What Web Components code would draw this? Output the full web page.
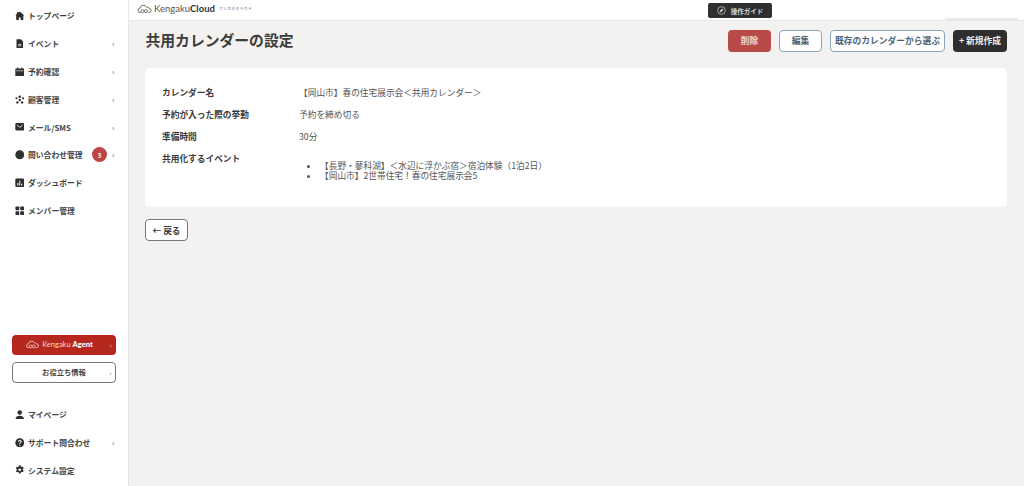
<!DOCTYPE html>
<html lang="ja">
<head>
<meta charset="utf-8">
<title>共用カレンダーの設定</title>
<style>
html, body { margin: 0; height: 100%; }
body { font-family: "Noto Sans CJK JP", "Noto Sans", sans-serif; color: #333; background: #f3f2f0; overflow: hidden; }
</style>
</head>
<body>
<app-shell>
  <side-nav slot="nav"></side-nav>
  <top-bar slot="top"></top-bar>
  <page-head slot="main" heading="共用カレンダーの設定">
    <ui-button kind="danger" style="width:43px">削除</ui-button>
    <ui-button kind="outline" style="width:43px">編集</ui-button>
    <ui-button kind="outline" style="width:115px">既存のカレンダーから選ぶ</ui-button>
    <ui-button kind="dark" style="width:54px">+ 新規作成</ui-button>
  </page-head>
  <detail-card slot="main">
    <detail-row label="カレンダー名">【岡山市】春の住宅展示会＜共用カレンダー＞</detail-row>
    <detail-row label="予約が入った際の挙動">予約を締め切る</detail-row>
    <detail-row label="準備時間">30分</detail-row>
    <detail-row label="共用化するイベント" list>
      <div>【長野・蓼科湖】＜水辺に浮かぶ宿＞宿泊体験（1泊2日）</div>
      <div>【岡山市】2世帯住宅！春の住宅展示会5</div>
    </detail-row>
  </detail-card>
  <back-link slot="main">← 戻る</back-link>
</app-shell>

<script>
const ICONS = {
  home: '<path d="M8 .8 5.500 3V1.500H3.200v3.500L.8 7.200 2 8.200V15h4.500v-4h3v4H14V8.200l1.200-1z"/>',
  doc: '<path d="M2.500 .5h7.500l3.500 3.500v11.500h-11z"/><path fill="#fff" d="M5.500 8.500h5v1.200h-5zM5.500 11h5v1.200h-5z"/>',
  cal: '<path d="M2 2.500h12a1.500 1.500 0 0 1 1.500 1.500v10a1.500 1.500 0 0 1-1.500 1.500H2A1.500 1.500 0 0 1 .5 14V4A1.500 1.500 0 0 1 2 2.500z"/><path fill="#fff" d="M2 6h12v1H2z"/><path d="M3.500 .8h2V4h-2zM10.500 .8h2V4h-2z"/>',
  people: '<circle cx="8" cy="3" r="2.200"/><circle cx="2.500" cy="5.500" r="1.800"/><circle cx="13.500" cy="5.500" r="1.800"/><circle cx="8" cy="8.500" r="2"/><circle cx="4" cy="12.500" r="2"/><circle cx="12" cy="12.500" r="2"/>',
  mail: '<rect x=".5" y="1.500" width="15" height="13" rx="2.500"/><path fill="none" stroke="#fff" stroke-width="1.400" d="m3.500 5.500 4.500 3.500 4.500-3.500"/>',
  dot: '<circle cx="8" cy="8" r="7.500"/>',
  chart: '<rect x=".5" y=".8" width="15" height="14.400" rx="2"/><path fill="#fff" d="M4 8.500h1.700V12.500H4zM7.200 4.500h1.600v8H7.200zM10.300 9.800H12v2.700h-1.700z"/>',
  grid: '<rect x=".8" y=".8" width="6.400" height="6.400" rx="1.200"/><rect x="8.800" y=".8" width="6.400" height="6.400" rx="1.200"/><rect x=".8" y="8.800" width="6.400" height="6.400" rx="1.200"/><rect x="8.800" y="8.800" width="6.400" height="6.400" rx="1.200"/>',
  user: '<circle cx="8" cy="4.300" r="3.800"/><path d="M1 15.200c0-3.800 3.200-5.400 7-5.400s7 1.600 7 5.400z"/>',
  help: '<circle cx="8" cy="8" r="7.500"/><path fill="none" stroke="#fff" stroke-width="1.700" d="M5.600 6.200C5.800 4.700 6.900 4.100 8 4.100c1.400 0 2.400.8 2.400 2 0 1.800-2.400 1.700-2.400 3.500"/><circle cx="8" cy="12" r="1" fill="#fff"/>',
  gear: '<path fill-rule="evenodd" d="M6.500.5h3l.4 2.100 1.300.7 2-.7 1.500 2.600-1.600 1.400v1.500l1.600 1.400-1.500 2.600-2-.7-1.300.7-.4 2.100h-3l-.4-2.100-1.300-.7-2 .7L1.300 10.500l1.600-1.400V6.900L1.300 5.500l1.500-2.600 2 .7 1.300-.7zM8 5.800a2.200 2.200 0 1 0 0 4.400 2.200 2.200 0 0 0 0-4.400z"/>'
};

const CLOUD = '<path fill="none" stroke="currentColor" stroke-width="1.300" d="M5 12H4a3 3 0 0 1-.4-6A5 5 0 0 1 13 4.500 3.800 3.800 0 0 1 16.500 6a3 3 0 0 1-.5 6h-1"/><circle cx="7" cy="10" r="2.200" fill="none" stroke="currentColor" stroke-width="1.200"/><circle cx="12" cy="10" r="2.200" fill="none" stroke="currentColor" stroke-width="1.200"/>';

class AppShell extends HTMLElement {
    constructor() {
        super();
        this.attachShadow({ mode: "open" });
        this.shadowRoot.innerHTML = `
            <style>
                :host { display: grid; grid-template-columns: 129px 1fr; grid-template-rows: 21px 1fr; height: 486px; }
                .nav { grid-row: 1 / 3; min-height: 0; }
                main { padding: 0 17px 0 16px; min-width: 0; }
            </style>
            <div class="nav"><slot name="nav"></slot></div>
            <div><slot name="top"></slot></div>
            <main><slot name="main"></slot></main>
        `;
    }
}

class NavItem extends HTMLElement {
    constructor() {
        super();
        this.attachShadow({ mode: "open" });
        const icon = ICONS[this.getAttribute("icon")] || "";
        const badge = this.getAttribute("badge");
        const arrow = this.hasAttribute("arrow");
        this.shadowRoot.innerHTML = `
            <style>
                :host { display: flex; align-items: center; height: 27.800px; padding: 0 13px 0 14.500px; font-size: 7.800px; font-weight: 700; color: #444; white-space: nowrap; }
                svg { width: 9.500px; height: 9.500px; fill: #2f2f2f; margin-right: 4px; flex: none; }
                .label { flex: 1; }
                .badge { width: 15px; height: 15px; border-radius: 50%; background: #bd4444; color: #fff; font-size: 6.500px; display: flex; align-items: center; justify-content: center; margin-right: 5px; }
                .arrow { font-size: 7.500px; font-weight: 400; color: #555; width: 3px; }
            </style>
            <svg viewBox="0 0 16 16">${icon}</svg>
            <span class="label"><slot></slot></span>
            ${badge ? `<span class="badge">${badge}</span>` : ""}
            ${arrow ? `<span class="arrow">›</span>` : ""}
        `;
    }
}

class SideNav extends HTMLElement {
    constructor() {
        super();
        this.attachShadow({ mode: "open" });
        this.shadowRoot.innerHTML = `
            <style>
                :host { display: flex; flex-direction: column; height: 486px; box-sizing: border-box; background: #fff; border-right: 1px solid #e6e6e6; padding: 2px 0 2px; }
                .spacer { flex: 1; }
                .promo { display: flex; align-items: center; justify-content: center; position: relative; box-sizing: border-box; margin: 0 12px 0 12px; border-radius: 4px; font-size: 7.500px; font-weight: 700; }
                .agent { height: 20px; background: #b6281e; color: #fff; margin-bottom: 7px; padding-right: 9px; font-family: "Lato", sans-serif; }
                .agent span { font-weight: 400; margin-right: 2px; color: #f1d6d3; }
                .agent svg { width: 13px; height: 9px; margin-right: 3px; color: #f1d6d3; }
                .useful { height: 21px; background: #fff; border: 1px solid #777; color: #444; font-size: 7.300px; margin-bottom: 18px; }
                .chev { position: absolute; right: 4px; font-weight: 400; font-size: 7.500px; color: #e5b4b0; top: 50%; transform: translateY(-50%); }
                .useful .chev { color: #888; }
            </style>
            <nav-item icon="home">トップページ</nav-item>
            <nav-item icon="doc" arrow>イベント</nav-item>
            <nav-item icon="cal" arrow>予約確認</nav-item>
            <nav-item icon="people" arrow>顧客管理</nav-item>
            <nav-item icon="mail" arrow>メール/SMS</nav-item>
            <nav-item icon="dot" badge="3" arrow>問い合わせ管理</nav-item>
            <nav-item icon="chart">ダッシュボード</nav-item>
            <nav-item icon="grid">メンバー管理</nav-item>
            <div class="spacer"></div>
            <div class="promo agent"><svg viewBox="0 0 20 14">${CLOUD}</svg><span>Kengaku</span><b>Agent</b><i class="chev">›</i></div>
            <div class="promo useful">お役立ち情報<i class="chev">›</i></div>
            <nav-item icon="user">マイページ</nav-item>
            <nav-item icon="help" arrow>サポート問合わせ</nav-item>
            <nav-item icon="gear">システム設定</nav-item>
        `;
    }
}

class TopBar extends HTMLElement {
    constructor() {
        super();
        this.attachShadow({ mode: "open" });
        this.shadowRoot.innerHTML = `
            <style>
                :host { display: flex; align-items: center; height: 21px; box-sizing: border-box; background: #fff; border-bottom: 1px solid #e8e8e8; padding: 0 17px 3px 8px; position: relative; }
                .logo { display: flex; align-items: center; font-family: "Lato", sans-serif; font-size: 9.500px; color: #555; }
                .logo svg { width: 15px; height: 10px; margin-right: 2px; color: #666; }
                .logo b { color: #333; }
                .sub { font-size: 3.800px; letter-spacing: .4px; color: #555; margin-left: 4px; font-family: "Noto Sans CJK JP", sans-serif; }
                .guide { position: absolute; left: 579px; top: 3px; width: 64px; height: 15px; box-sizing: border-box; display: flex; align-items: center; justify-content: center; background: #2f2f2f; color: #ddd; border-radius: 2px; font-size: 6.500px; font-weight: 700; }
                .guide svg { width: 9px; height: 9px; margin-right: 5px; }
                .rule { position: absolute; right: 6px; top: 18px; width: 73px; height: 2px; background: #e3ebef; }
            </style>
            <div class="logo"><svg viewBox="0 0 20 14">${CLOUD}</svg><span>Kengaku<b>Cloud</b></span><span class="sub">ケンガククラウド</span></div>
            <div class="guide">
                <svg viewBox="0 0 16 16"><circle cx="8" cy="8" r="6.800" fill="none" stroke="#ddd" stroke-width="1.200"/><path fill="#ddd" d="m11.500 4.500-2 5-5 2 2-5z"/></svg>
                操作ガイド
            </div>
            <div class="rule"></div>
        `;
    }
}

class PageHead extends HTMLElement {
    constructor() {
        super();
        this.attachShadow({ mode: "open" });
        this.shadowRoot.innerHTML = `
            <style>
                :host { display: flex; align-items: center; justify-content: space-between; height: 39px; margin-bottom: 8px; }
                h1 { margin: -2px 0 0 .5px; font-size: 14.800px; font-weight: 700; color: #3c3c3c; white-space: nowrap; }
                .actions { display: flex; gap: 8px; }
            </style>
            <h1>${this.getAttribute("heading")}</h1>
            <div class="actions"><slot></slot></div>
        `;
    }
}

class UiButton extends HTMLElement {
    constructor() {
        super();
        this.attachShadow({ mode: "open" });
        this.shadowRoot.innerHTML = `
            <style>
                :host { display: flex; align-items: center; justify-content: center; box-sizing: border-box; height: 22px; border-radius: 4px; font-size: 8.750px; font-weight: 700; white-space: nowrap; }
                :host([kind="danger"]) { background: #b94a4a; color: #f3dcdc; }
                :host([kind="outline"]) { background: #fff; border: 1px solid #88a6b8; color: #4f6472; }
                :host([kind="dark"]) { background: #2e2e2e; color: #eee; }
            </style>
            <slot></slot>
        `;
    }
}

class DetailCard extends HTMLElement {
    constructor() {
        super();
        this.attachShadow({ mode: "open" });
        this.shadowRoot.innerHTML = `
            <style>
                :host { display: block; box-sizing: border-box; height: 139px; background: #fff; border-radius: 5px; padding: 13.500px 17px; }
            </style>
            <slot></slot>
        `;
    }
}

class DetailRow extends HTMLElement {
    constructor() {
        super();
        this.attachShadow({ mode: "open" });
        const isList = this.hasAttribute("list");
        this.shadowRoot.innerHTML = `
            <style>
                :host { display: grid; grid-template-columns: 137px 1fr; font-size: 8.700px; line-height: 22px; height: 22px; color: #444; }
                :host([list]) { height: auto; }
                .label { font-weight: 700; color: #3a3a3a; white-space: nowrap; }
                .value { color: #555; white-space: nowrap; }
                .list { padding: 13px 0 0 21px; line-height: 10.800px; font-size: 8.700px; }
                .list ::slotted(div) { display: list-item; list-style: disc; }
            </style>
            <div class="label">${this.getAttribute("label")}</div>
            <div class="value ${isList ? "list" : ""}"><slot></slot></div>
        `;
    }
}

class BackLink extends HTMLElement {
    constructor() {
        super();
        this.attachShadow({ mode: "open" });
        this.shadowRoot.innerHTML = `
            <style>
                :host { display: flex; width: 43px; height: 22px; box-sizing: border-box; margin-top: 12px; align-items: center; justify-content: center; background: #fff; border: 1px solid #777; border-radius: 4px; font-size: 8.700px; font-weight: 700; color: #3a3a3a; }
            </style>
            <slot></slot>
        `;
    }
}

customElements.define("nav-item", NavItem);
customElements.define("side-nav", SideNav);
customElements.define("top-bar", TopBar);
customElements.define("page-head", PageHead);
customElements.define("ui-button", UiButton);
customElements.define("detail-row", DetailRow);
customElements.define("detail-card", DetailCard);
customElements.define("back-link", BackLink);
customElements.define("app-shell", AppShell);
</script>
</body>
</html>
